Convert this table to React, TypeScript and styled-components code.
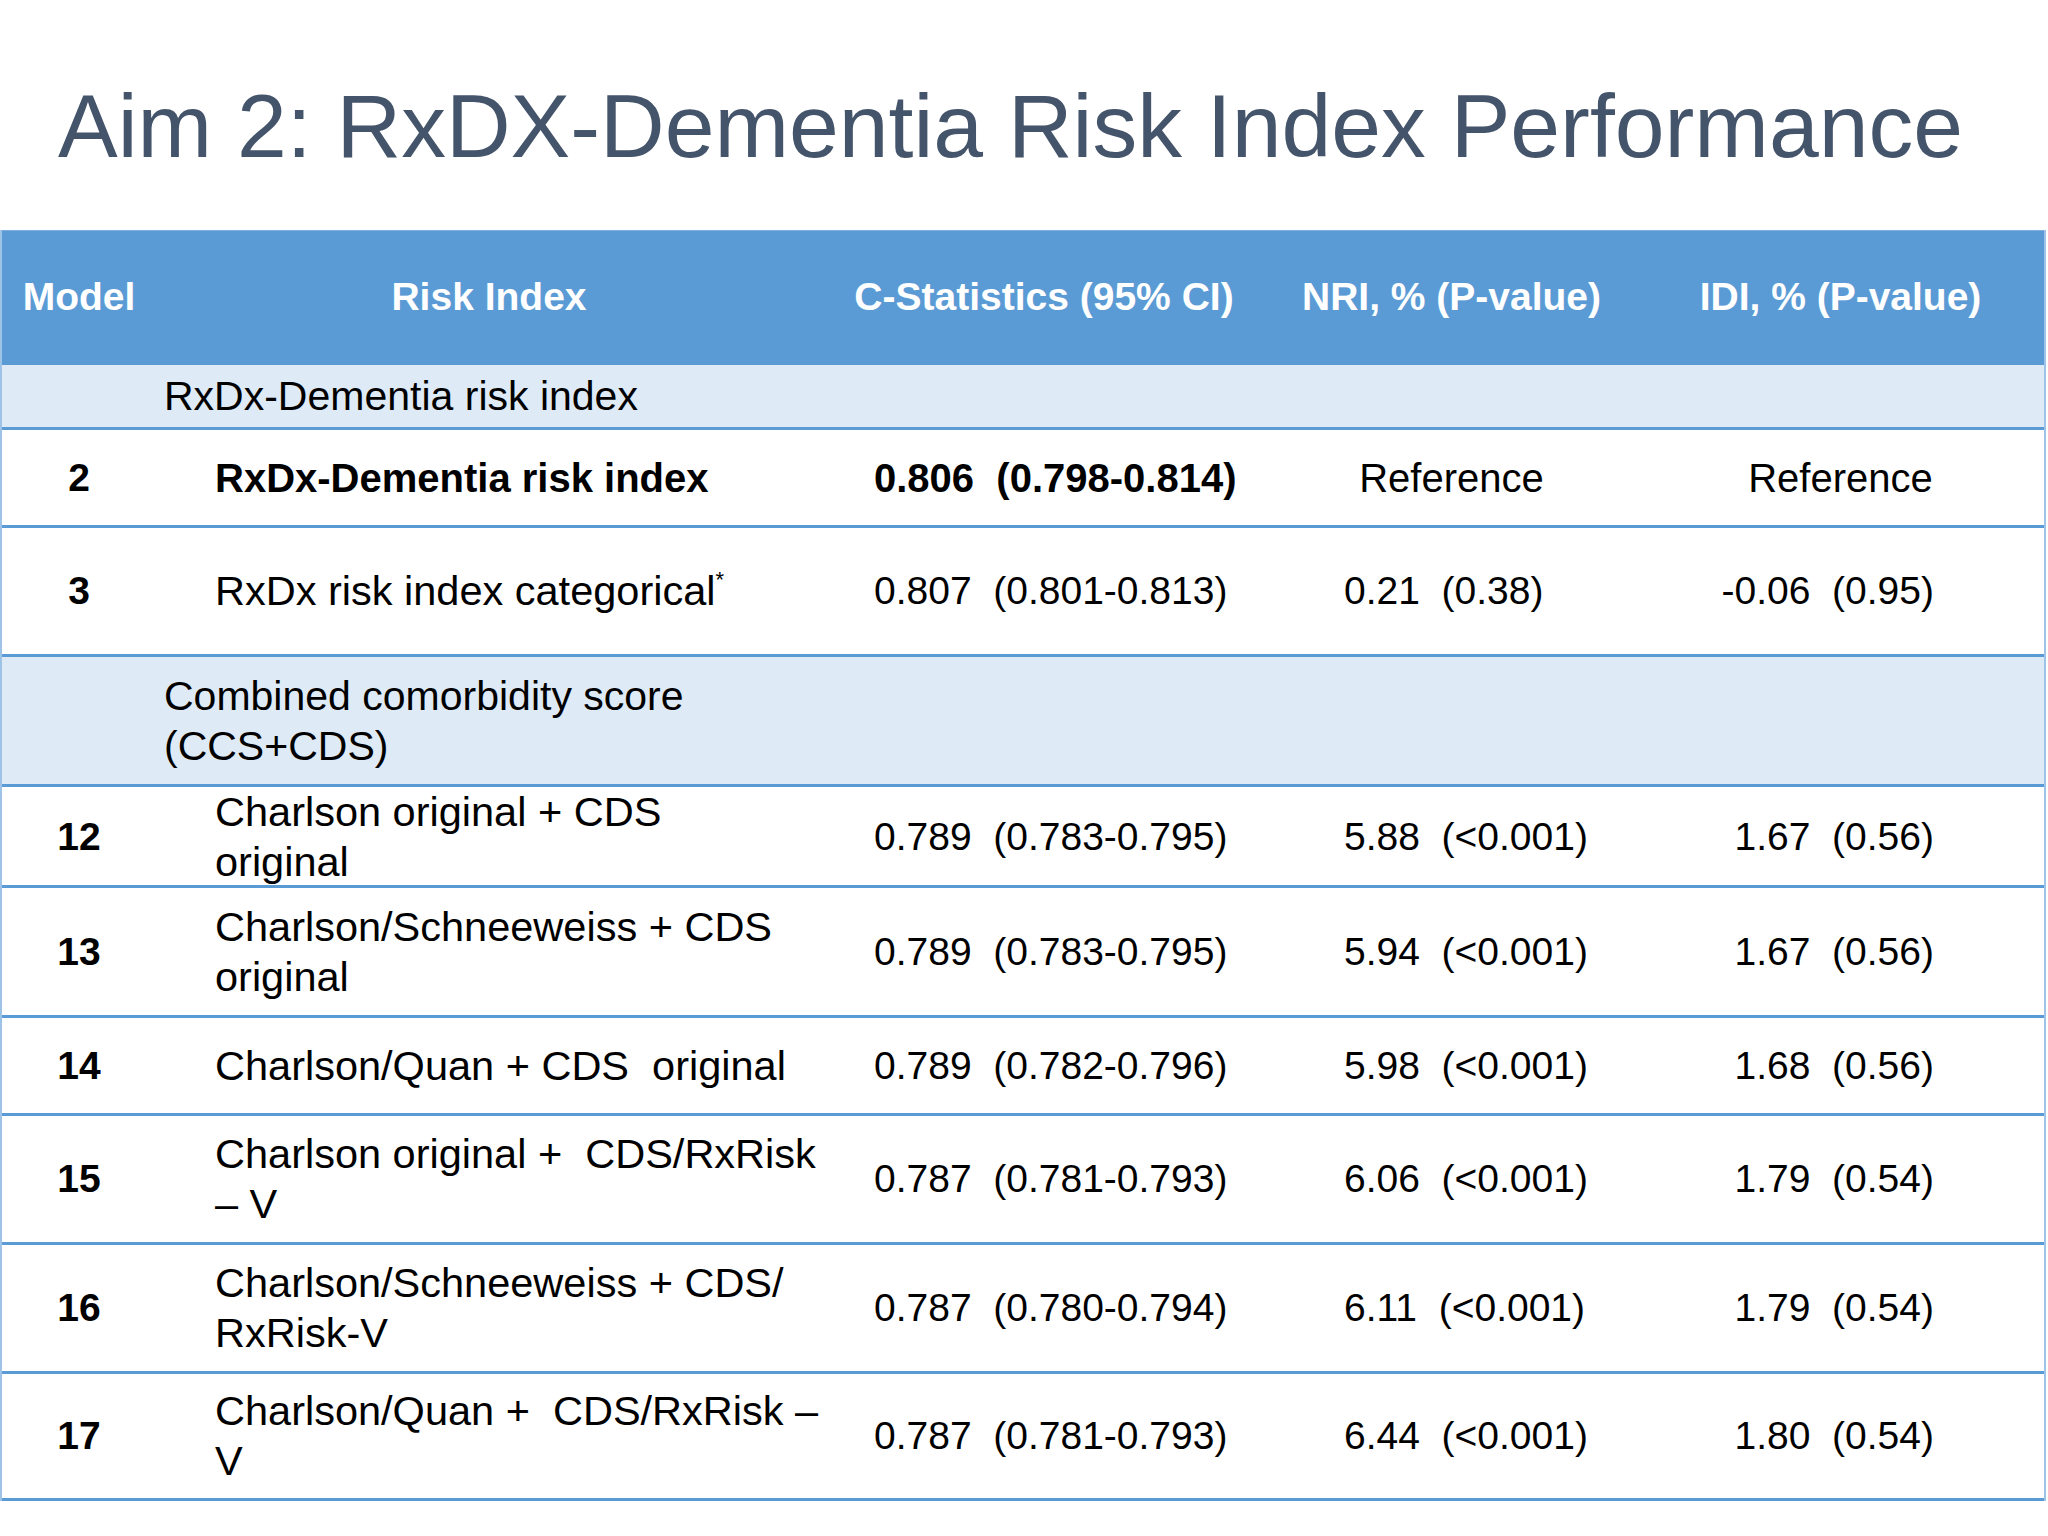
import styled, { createGlobalStyle } from 'styled-components'

const GlobalStyle = createGlobalStyle`
  html, body {
    margin: 0;
    padding: 0;
    background: #ffffff;
  }
  body {
    font-family: 'Liberation Sans', Arial, sans-serif;
    color: #000;
  }
`

const COLUMNS = '154px 666px 444px 371px 1fr'
const BLUE = '#5b9bd5'

const Slide = styled.div`
  width: 2048px;
  height: 1536px;
  background: #fff;
  overflow: hidden;
`

const Title = styled.h1`
  margin: 0;
  padding: 73px 0 0 58px;
  height: 157px;
  box-sizing: border-box;
  font-size: 89.5px;
  line-height: 1.2;
  font-weight: 400;
  color: #44546a;
  white-space: nowrap;
`

const Table = styled.div`
  margin-top: 73px;
  width: 2046px;
  border-left: 2px solid #9dc3e6;
  border-right: 2px solid #9dc3e6;
  box-sizing: border-box;
`

const HeaderRow = styled.div`
  display: grid;
  grid-template-columns: ${COLUMNS};
  height: 132px;
  background: ${BLUE};
  box-sizing: border-box;
  border-top: 1px solid #7fb0dd;
`

const HeadCell = styled.div`
  display: flex;
  align-items: center;
  justify-content: center;
  color: #fff;
  font-weight: 700;
  font-size: 39px;
  white-space: nowrap;
`

const Row = styled.div<{ $h: number; $section?: boolean }>`
  display: grid;
  grid-template-columns: ${COLUMNS};
  height: ${(p) => p.$h}px;
  box-sizing: border-box;
  border-top: 3px solid ${BLUE};
  background: ${(p) => (p.$section ? '#deeaf6' : '#ffffff')};

  &:last-child {
    border-bottom: 3px solid ${BLUE};
  }
`

const SectionText = styled.div`
  grid-column: 2 / 6;
  display: flex;
  align-items: center;
  padding-left: 8px;
  font-size: 41px;
  line-height: 50px;
`

const ModelCell = styled.div`
  display: flex;
  align-items: center;
  justify-content: center;
  font-weight: 700;
  font-size: 39px;
`

const Cell = styled.div<{
  $align?: 'left' | 'center' | 'right'
  $pad?: number
  $bold?: boolean
  $size?: number
}>`
  display: flex;
  align-items: center;
  justify-content: ${(p) =>
    p.$align === 'center' ? 'center' : p.$align === 'right' ? 'flex-end' : 'flex-start'};
  padding-left: ${(p) => (p.$align === 'left' || !p.$align ? p.$pad ?? 0 : 0)}px;
  padding-right: ${(p) => (p.$align === 'right' ? p.$pad ?? 0 : 0)}px;
  font-size: ${(p) => p.$size ?? 39}px;
  font-weight: ${(p) => (p.$bold ? 700 : 400)};
  line-height: 50px;
  white-space: pre;
`

const Sup = styled.sup`
  font-size: 22px;
  line-height: 0;
  vertical-align: 18px;
`

type DataRow = {
  kind: 'data'
  model: string
  name: React.ReactNode
  cstat: string
  nri: string
  idi: string
  h: number
  bold?: boolean
}

type SectionRow = { kind: 'section'; label: React.ReactNode; h: number }

const rows: (DataRow | SectionRow)[] = [
  { kind: 'section', label: 'RxDx-Dementia risk index', h: 65 },
  {
    kind: 'data',
    model: '2',
    name: 'RxDx-Dementia risk index',
    cstat: '0.806  (0.798-0.814)',
    nri: 'Reference',
    idi: 'Reference',
    h: 98,
    bold: true,
  },
  {
    kind: 'data',
    model: '3',
    name: (
      <>
        RxDx risk index categorical<Sup>*</Sup>
      </>
    ),
    cstat: '0.807  (0.801-0.813)',
    nri: '0.21  (0.38)',
    idi: '-0.06  (0.95)',
    h: 129,
  },
  {
    kind: 'section',
    label: (
      <>
        Combined comorbidity score
        <br />
        (CCS+CDS)
      </>
    ),
    h: 130,
  },
  {
    kind: 'data',
    model: '12',
    name: 'Charlson original + CDS\noriginal',
    cstat: '0.789  (0.783-0.795)',
    nri: '5.88  (<0.001)',
    idi: '1.67  (0.56)',
    h: 101,
  },
  {
    kind: 'data',
    model: '13',
    name: 'Charlson/Schneeweiss + CDS\noriginal',
    cstat: '0.789  (0.783-0.795)',
    nri: '5.94  (<0.001)',
    idi: '1.67  (0.56)',
    h: 130,
  },
  {
    kind: 'data',
    model: '14',
    name: 'Charlson/Quan + CDS  original',
    cstat: '0.789  (0.782-0.796)',
    nri: '5.98  (<0.001)',
    idi: '1.68  (0.56)',
    h: 98,
  },
  {
    kind: 'data',
    model: '15',
    name: 'Charlson original +  CDS/RxRisk\n– V',
    cstat: '0.787  (0.781-0.793)',
    nri: '6.06  (<0.001)',
    idi: '1.79  (0.54)',
    h: 129,
  },
  {
    kind: 'data',
    model: '16',
    name: 'Charlson/Schneeweiss + CDS/\nRxRisk-V',
    cstat: '0.787  (0.780-0.794)',
    nri: '6.11  (<0.001)',
    idi: '1.79  (0.54)',
    h: 129,
  },
  {
    kind: 'data',
    model: '17',
    name: 'Charlson/Quan +  CDS/RxRisk –\nV',
    cstat: '0.787  (0.781-0.793)',
    nri: '6.44  (<0.001)',
    idi: '1.80  (0.54)',
    h: 130,
  },
]

export default function App() {
  return (
    <Slide>
      <GlobalStyle />
      <Title>Aim 2: RxDX-Dementia Risk Index Performance</Title>
      <Table>
        <HeaderRow>
          <HeadCell>Model</HeadCell>
          <HeadCell>Risk Index</HeadCell>
          <HeadCell>C-Statistics (95% CI)</HeadCell>
          <HeadCell>NRI, % (P-value)</HeadCell>
          <HeadCell>IDI, % (P-value)</HeadCell>
        </HeaderRow>
        {rows.map((row, i) =>
          row.kind === 'section' ? (
            <Row key={i} $h={row.h} $section>
              <SectionText>
                <div>{row.label}</div>
              </SectionText>
            </Row>
          ) : (
            <Row key={i} $h={row.h}>
              <ModelCell>{row.model}</ModelCell>
              <Cell $pad={59} $bold={row.bold} $size={row.bold ? 40 : 41.5}>
                <div>{row.name}</div>
              </Cell>
              <Cell $pad={52} $bold={row.bold} $size={row.bold ? 40 : 39}>
                {row.cstat}
              </Cell>
              {row.nri === 'Reference' ? (
                <Cell $align="center" $size={40}>
                  {row.nri}
                </Cell>
              ) : (
                <Cell $pad={78}>{row.nri}</Cell>
              )}
              {row.idi === 'Reference' ? (
                <Cell $align="center" $size={40}>
                  {row.idi}
                </Cell>
              ) : (
                <Cell $align="right" $pad={110}>
                  {row.idi}
                </Cell>
              )}
            </Row>
          ),
        )}
      </Table>
    </Slide>
  )
}
